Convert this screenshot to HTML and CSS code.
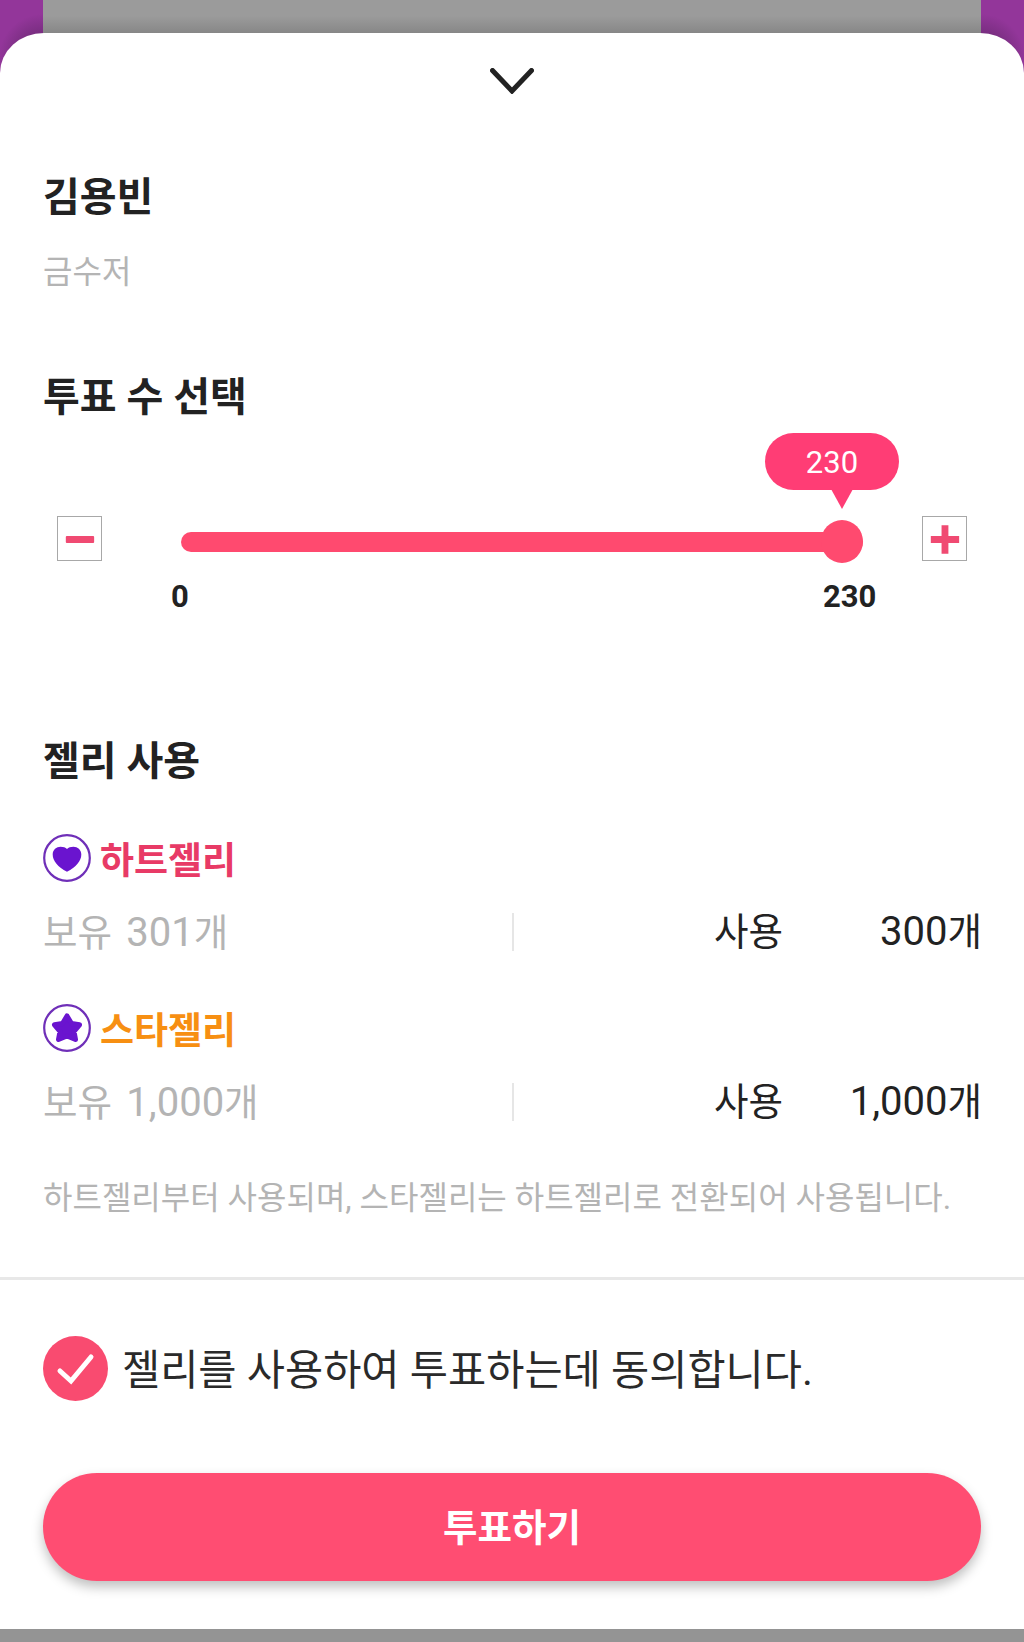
FILE: index.html
```html
<!DOCTYPE html>
<html lang="ko">
<head>
<meta charset="utf-8">
<title>투표</title>
<link rel="stylesheet" href="styles.css">
</head>
<body>
<div class="backdrop">
  <div class="side side-left"></div>
  <div class="mid"></div>
  <div class="side side-right"></div>
</div>
<main class="sheet">
  <div class="handle">
    <svg class="chevron" viewBox="0 0 44 26" width="44" height="26"><path d="M2.5 2.500 22 23 41.500 2.500" fill="none" stroke="#222" stroke-width="5" stroke-linecap="round" stroke-linejoin="miter"/></svg>
  </div>
  <section class="body">
    <h1 class="title name">김용빈</h1>
    <p class="role">금수저</p>
    <h2 class="title vote-title">투표 수 선택</h2>
    <div class="slider">
      <button class="step" aria-label="감소"><svg viewBox="0 0 43 43" width="42" height="42"><rect x="8" y="18.500" width="29" height="7" rx="1" fill="#f04a72"/></svg></button>
      <div class="track"><div class="thumb"></div></div>
      <button class="step" aria-label="증가"><svg viewBox="0 0 43 43" width="42" height="42"><path d="M8 18.500h11v-11h7v11h11v7h-11v11h-7v-11h-11z" fill="#f04a72"/></svg></button>
      <div class="bubble">230</div>
    </div>
    <div class="scale"><span>0</span><span>230</span></div>
    <h2 class="title jelly-title">젤리 사용</h2>
    <div class="jelly">
      <div class="jelly-name heart">
        <svg class="badge" viewBox="0 0 48 48" width="48" height="48"><circle cx="24" cy="24" r="22.800" fill="#fff" stroke="#6f2fb8" stroke-width="2.200"/><path d="M24 37.700C15 33 9.700 27 9.700 20.500 9.700 15.500 13.500 12.700 17.500 12.700 20.500 12.700 22.500 13.600 24 15 25.500 13.600 27.500 12.700 30.500 12.700 34.500 12.700 38.300 15.500 38.300 20.500 38.300 27 33 33 24 37.700Z" fill="#6a14cf"/></svg>
        <span class="jelly-label">하트젤리</span>
      </div>
      <div class="jelly-row">
        <div class="own">보유 <span class="num">301</span>개</div>
        <div class="use"><span>사용</span><span><span class="num">300</span>개</span></div>
      </div>
    </div>
    <div class="jelly">
      <div class="jelly-name star">
        <svg class="badge" viewBox="0 0 48 48" width="48" height="48"><circle cx="24" cy="24" r="22.800" fill="#fff" stroke="#6f2fb8" stroke-width="2.200"/><path d="M24 12 28.500 19.500 36.500 20.800 31 27.500 32.500 35.500 24 32 15.500 35.500 17 27.500 11.500 20.800 19.500 19.500Z" fill="#6a14cf" stroke="#6a14cf" stroke-width="5" stroke-linejoin="round"/></svg>
        <span class="jelly-label">스타젤리</span>
      </div>
      <div class="jelly-row">
        <div class="own">보유 <span class="num">1,000</span>개</div>
        <div class="use"><span>사용</span><span><span class="num">1,000</span>개</span></div>
      </div>
    </div>
    <p class="note">하트젤리부터 사용되며, 스타젤리는 하트젤리로 전환되어 사용됩니다.</p>
  </section>
  <hr class="rule">
  <section class="foot">
    <label class="agree">
      <svg viewBox="0 0 65 65" width="65" height="65"><circle cx="32.500" cy="32.500" r="32.500" fill="#f94b70"/><path d="M17 35 28 45 48 21" fill="none" stroke="#fff" stroke-width="5" stroke-linecap="round" stroke-linejoin="miter"/></svg>
      <span class="agree-text">젤리를 사용하여 투표하는데 동의합니다.</span>
    </label>
    <button class="submit">투표하기</button>
  </section>
</main>
</body>
</html>
```
FILE: styles.css
```css
* { box-sizing: border-box; }
html, body { margin: 0; padding: 0; }
body {
  width: 1024px;
  height: 1642px;
  overflow: hidden;
  background: #949494;
  font-family: Roboto, "Noto Sans CJK KR", sans-serif;
  color: #222;
}
.backdrop {
  display: flex;
  height: 80px;
  margin-bottom: -47px;
}
.side {
  width: 43px;
  flex: none;
  background-color: #93369a;
}
.side-left { background-image: radial-gradient(circle at 43px 58px, #6d2a75 16px, #93369a 44px); }
.side-right { background-image: radial-gradient(circle at 0 58px, #6d2a75 16px, #93369a 44px); }
.mid {
  flex: 1;
  background: linear-gradient(#9b9b9b 16px, #878787 33px);
}
.sheet {
  position: relative;
  height: 1596px;
  background: #fff;
  border-radius: 44px 44px 0 0 / 40px 40px 0 0;
}
.handle {
  display: flex;
  justify-content: center;
  padding-top: 35px;
  height: 80px;
}
.chevron { display: block; }
.body { padding: 0 43px; }
.title {
  margin: 0;
  font-size: 40px;
  line-height: 48px;
  font-weight: 700;
  color: #222;
}
.name { margin-top: 61px; }
.role {
  margin: 30px 0 0;
  font-size: 32px;
  line-height: 40px;
  color: #b4b4b4;
}
.vote-title { margin-top: 82px; }
.slider {
  position: relative;
  display: flex;
  align-items: center;
  justify-content: space-between;
  margin: 94px 14px 0;
  height: 45px;
}
.step {
  width: 45px;
  height: 45px;
  padding: 0;
  border: 1.500px solid #a8a8a8;
  background: #fff;
  flex: none;
}
.step svg { display: block; }
.track {
  position: absolute;
  left: 124px;
  top: 16px;
  width: 682px;
  height: 20px;
  border-radius: 10px;
  background: #ff4a6f;
}
.thumb {
  position: absolute;
  right: 0;
  top: -12px;
  width: 42px;
  height: 43px;
  border-radius: 50%;
  background: #ff4a6f;
}
.bubble {
  position: absolute;
  left: 708px;
  top: -83px;
  width: 134px;
  height: 57px;
  border-radius: 29px;
  background: #ff3d75;
  color: #fff;
  font-size: 31px;
  line-height: 59px;
  text-align: center;
}
.bubble::after {
  content: "";
  position: absolute;
  left: 66px;
  top: 56px;
  border-left: 11px solid transparent;
  border-right: 11px solid transparent;
  border-top: 20px solid #ff3d75;
}
.scale {
  position: relative;
  height: 36px;
  margin-top: 18px;
  font-size: 31px;
  line-height: 36px;
  font-weight: 700;
  color: #222;
}
.scale span:first-child { position: absolute; left: 128px; }
.scale span:last-child { position: absolute; left: 780px; }
.jelly-title { margin-top: 123px; }
.jelly-name {
  display: flex;
  align-items: center;
  gap: 9px;
  height: 48px;
  font-size: 37px;
  font-weight: 700;
  line-height: 40px;
}
.jelly-label { padding-top: 7px; }
.heart { margin-top: 48px; color: #e83a66; }
.star { margin-top: 52px; color: #f78f12; }
.badge { flex: none; }
.jelly-row {
  display: flex;
  align-items: center;
  height: 40px;
  margin-top: 30px;
  font-size: 37.500px;
  line-height: 40px;
}
.num { font-size: 40px; }
.own {
  width: 471px;
  height: 38px;
  color: #b4b4b4;
  word-spacing: 5px;
  border-right: 2px solid #e6e6e6;
  white-space: nowrap;
}
.use {
  flex: 1;
  display: flex;
  justify-content: space-between;
  padding-left: 200px;
  margin-right: -1px;
  color: #222;
}
.note {
  margin: 56px 0 0;
  font-size: 32px;
  line-height: 40px;
  color: #b4b4b4;
  white-space: nowrap;
}
.rule {
  margin: 59px 0 0;
  border: 0;
  height: 3px;
  background: #e8e8e8;
}
.foot { padding: 56px 43px 0; }
.agree {
  display: flex;
  align-items: center;
  gap: 14px;
  font-size: 41.500px;
  line-height: 50px;
  color: #2a2a2a;
}
.agree svg { flex: none; display: block; }
.agree-text { padding-top: 4px; white-space: nowrap; }
.submit {
  display: block;
  width: 100%;
  height: 108px;
  margin-top: 72px;
  border: 0;
  border-radius: 54px;
  background: #ff4d72;
  color: #fff;
  font: 700 37.500px/108px Roboto, "Noto Sans CJK KR", sans-serif;
  box-shadow: 0 6px 12px rgba(0,0,0,.25);
}
```
